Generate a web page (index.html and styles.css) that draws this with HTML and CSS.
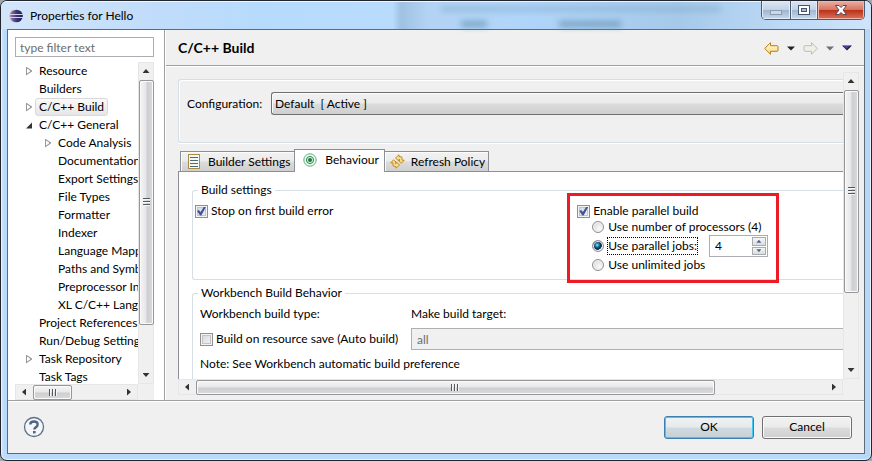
FILE: index.html
```html
<!DOCTYPE html>
<html lang="en">
<head>
<meta charset="utf-8">
<title>Properties for Hello</title>
<link rel="stylesheet" href="styles.css">
</head>
<body>
<div class="window">
  <header class="titlebar">
    <svg class="app-icon" width="14" height="14" viewBox="0 0 14 14">
      <defs><linearGradient id="ball" x1="0" x2="1"><stop offset="0" stop-color="#8e7fb4"/><stop offset=".5" stop-color="#3c3872"/><stop offset="1" stop-color="#1e1b58"/></linearGradient></defs>
      <path d="M5 .5A7 7 0 0 0 5 13.500A9 9 0 0 1 5 .5z" fill="#d99a92"/>
      <circle cx="7.500" cy="7" r="6.300" fill="url(#ball)"/>
      <path d="M1 5.500h13M1 8.500h13" stroke="#d4d4ec" stroke-width="1"/>
    </svg>
    <span class="title">Properties for Hello</span>
    <div class="blur-code" aria-hidden="true"></div>
    <div class="controls">
      <button class="ctl min" aria-label="Minimize"><svg width="14" height="14" viewBox="0 0 14 14"><rect x="1.500" y="7.500" width="11" height="4" fill="#c9d9ea" stroke="#8b9db1"/></svg></button>
      <button class="ctl max" aria-label="Maximize"><svg width="14" height="14" viewBox="0 0 14 14"><rect x="1.500" y="2.500" width="11" height="9" fill="#fff" stroke="#46536a"/><rect x="4.500" y="5.500" width="5" height="3" fill="#a9bdd6" stroke="#46536a"/></svg></button>
      <button class="ctl close" aria-label="Close"><svg width="14" height="14" viewBox="0 0 14 14"><path d="M1.500 2.500h3.500l2 2 2-2h3.500l-3.500 4.500 3.500 4.500h-3.500l-2-2-2 2h-3.500l3.500-4.500z" fill="#fff" stroke="#5b4650"/></svg></button>
    </div>
  </header>

  <div class="client">
    <div class="main">
      <aside class="nav">
        <input class="filter" type="text" placeholder="type filter text" aria-label="Filter">
        <div class="tree-frame">
          <ul class="tree">
            <li class="closed"><span>Resource</span></li>
            <li><span>Builders</span></li>
            <li class="closed selected"><span>C/C++ Build</span></li>
            <li class="open"><span>C/C++ General</span></li>
            <li class="child closed"><span>Code Analysis</span></li>
            <li class="child"><span>Documentation</span></li>
            <li class="child"><span>Export Settings</span></li>
            <li class="child"><span>File Types</span></li>
            <li class="child"><span>Formatter</span></li>
            <li class="child"><span>Indexer</span></li>
            <li class="child"><span>Language Mappings</span></li>
            <li class="child"><span>Paths and Symbols</span></li>
            <li class="child"><span>Preprocessor Include</span></li>
            <li class="child"><span>XL C/C++ Language</span></li>
            <li><span>Project References</span></li>
            <li><span>Run/Debug Settings</span></li>
            <li class="closed"><span>Task Repository</span></li>
            <li><span>Task Tags</span></li>
          </ul>
          <div class="vbar"><i class="up"></i><div class="thumb tall"><i class="grip"></i></div><i class="down"></i></div>
          <div class="hbar"><i class="left"></i><div class="thumb short"><i class="grip"></i></div><i class="right"></i></div>
          <div class="corner"></div>
        </div>
      </aside>

      <section class="content">
        <div class="page-head">
          <h1>C/C++ Build</h1>
          <nav class="tools">
            <button aria-label="Back"><svg width="15" height="13" viewBox="0 0 15 13"><defs><linearGradient id="gold" x2="0" y2="1"><stop offset="0" stop-color="#fffbe0"/><stop offset="1" stop-color="#f9d877"/></linearGradient></defs><path d="M.7 6.500l5.800-5.800v3h6.500q1 0 1 1v3.600q0 1-1 1h-6.500v3z" fill="url(#gold)" stroke="#b87d16"/></svg></button>
            <button aria-label="Back history"><svg width="8" height="5" viewBox="0 0 8 5"><path d="M0 .5h8l-4 4z" fill="#222"/></svg></button>
            <button aria-label="Forward"><svg width="15" height="13" viewBox="0 0 15 13"><path d="M14.300 6.500l-5.800-5.800v3h-6.500q-1 0-1 1v3.600q0 1 1 1h6.500v3z" fill="#eef0e8" stroke="#bcbcb8"/></svg></button>
            <button aria-label="Forward history"><svg width="8" height="5" viewBox="0 0 8 5"><path d="M0 .5h8l-4 4z" fill="#707074"/></svg></button>
            <button aria-label="Menu"><svg width="10" height="6" viewBox="0 0 10 6"><path d="M0 .5h10l-5 5z" fill="#1c1a3c"/><path d="M1.500 1h6l-3 3z" fill="#4b40a0"/></svg></button>
          </nav>
        </div>
        <div class="scroller">
          <div class="view">
            <div class="config">
              <label for="cfg">Configuration:</label>
              <select id="cfg"><option>Default&nbsp; [ Active ]</option></select>
            </div>
            <div class="tabs" role="tablist">
              <button class="tab" role="tab"><svg width="12" height="15" viewBox="0 0 12 15"><rect x=".5" y=".5" width="11" height="14" fill="#f4f8f4" stroke="#a98c47"/><path d="M2 3.500h8M2 6.500h8M2 9.500h8M2 12.500h8" stroke="#54696a"/></svg>Builder Settings</button>
              <button class="tab active" role="tab"><svg width="14" height="14" viewBox="0 0 14 14"><circle cx="7" cy="7" r="6.200" fill="#f2fbf3" stroke="#5cab80"/><circle cx="7" cy="7" r="3.600" fill="#d9efdb" stroke="#2f8b58"/><circle cx="7" cy="7" r="2" fill="#1b7a35"/></svg>Behaviour</button>
              <button class="tab" role="tab"><svg width="15" height="15" viewBox="0 0 15 15"><g fill="#fbe08c" stroke="#c08a2a"><path id="swoop" d="M5.500 4L9 .8V2.300L12 3.200V6.200H14.200L11.500 9.200 8.800 6.800H9.500V5.200L8.800 5.600V7z"/><path d="M9.500 11L6 14.200V12.700L3 11.800V8.800H.8L3.500 5.800 6.200 8.200H5.500V9.800L6.200 9.400V8z"/></g></svg>Refresh Policy</button>
            </div>
            <div class="page">
              <fieldset class="build">
                <legend>Build settings</legend>
                <div class="build-grid">
                  <label class="row"><input type="checkbox" checked>Stop on first build error</label>
                  <div class="parallel">
                    <label class="row"><input type="checkbox" checked>Enable parallel build</label>
                    <label class="row sub"><input type="radio" name="jobs">Use number of processors (4)</label>
                    <div class="row sub jobs">
                      <input type="radio" name="jobs" id="par" checked><label class="focused" for="par">Use parallel jobs:</label>
                      <div class="spinner"><input type="text" value="4" aria-label="Parallel jobs"><div class="spin"><button class="inc" aria-label="Increase"></button><button class="dec" aria-label="Decrease"></button></div></div>
                    </div>
                    <label class="row sub"><input type="radio" name="jobs">Use unlimited jobs</label>
                  </div>
                </div>
              </fieldset>
              <fieldset class="bench">
                <legend>Workbench Build Behavior</legend>
                <div class="bench-grid">
                  <span>Workbench build type:</span>
                  <label for="target">Make build target:</label>
                  <label class="row"><input type="checkbox">Build on resource save (Auto build)</label>
                  <input class="target" id="target" type="text" value="all" disabled>
                  <span class="note">Note: See Workbench automatic build preference</span>
                </div>
              </fieldset>
            </div>
          </div>
          <div class="vbar"><i class="up"></i><div class="thumb mid"><i class="grip"></i></div><i class="down"></i></div>
          <div class="hbar"><i class="left"></i><div class="thumb wide"><i class="grip"></i></div><i class="right"></i></div>
        </div>
      </section>
    </div>

    <footer class="footer">
      <button class="help" aria-label="Help"><svg width="22" height="22" viewBox="0 0 22 22"><circle cx="11" cy="11" r="9.500" fill="#f4f6fa" stroke="#5d7088" stroke-width="1.300"/><path d="M7.300 8.500Q7.300 5.500 11 5.500T14.600 8.400Q14.600 10 12.800 11.200 11.300 12.200 11.300 13.500" fill="none" stroke="#4f6483" stroke-width="2.400"/><rect x="10" y="15" width="2.600" height="2.400" fill="#4f6483"/></svg></button>
      <button class="btn primary">OK</button>
      <button class="btn">Cancel</button>
    </footer>
  </div>
</div>
</body>
</html>
```

FILE: styles.css
```css
*, *::before, *::after { box-sizing: border-box; }

body {
  margin: 0;
  background: #9fa6ae;
  color: #000;
  font: 12px/16px Lato, "Open Sans", sans-serif;
}

button, input, select { font: inherit; color: inherit; margin: 0; }
button { padding: 0; border: 0; background: none; }
svg { display: block; flex: none; }

.window {
  display: flex;
  flex-direction: column;
  height: 100vh;
  padding: 0 6px 6px;
  border: 1px solid #22252c;
  border-radius: 7px;
  background: linear-gradient(90deg, #cfe3fa 0, #b9dafb 4px, #b9dafb 99%, #b5d4f4 100%);
  box-shadow: inset 0 0 0 1px #e6f3ff;
  overflow: hidden;
}

/* Title bar */
.titlebar {
  display: flex;
  flex: none;
  align-items: center;
  height: 28px;
  margin: 0 -6px;
  padding-left: 8px;
  border-top: 1px solid #eef6ff;
  background: linear-gradient(90deg, #d3e5fa 0, #c0dcfa 18%, #b7dbfd 30%, #b9dcfd 45%, #9fc1e2 46%, #b3d3f4 49%, #b1d5fa 60%, #a6c9ea 78%, #bcd9f6 90%, #cfe4fb 100%);
}
.title { margin-left: 7px; }
.blur-code {
  align-self: stretch;
  width: 280px;
  margin-left: auto;
  background:
    linear-gradient(#7fa9c6, #7fa9c6) 0 5px / 280px 4px no-repeat,
    linear-gradient(#5f8fae, #5f8fae) 20px 19px / 26px 6px no-repeat,
    linear-gradient(#5f8fae, #5f8fae) 118px 19px / 62px 6px no-repeat;
  filter: blur(3px);
  opacity: .7;
}
.controls {
  display: flex;
  align-self: flex-start;
  height: 19px;
  margin: -1px 6px 0 40px;
  border: 1px solid #4b5b70;
  border-top: 0;
  border-radius: 0 0 5px 5px;
  overflow: hidden;
}
.ctl {
  display: flex;
  justify-content: center;
  align-items: center;
  width: 28px;
  background: linear-gradient(#dbe6f2, #c2d3e6 48%, #9fb5cf 50%, #c3daf0);
  box-shadow: inset 0 0 0 1px #e4edf7;
}
.ctl + .ctl { border-left: 1px solid #4b5b70; }
.ctl.max { width: 27px; }
.ctl.close { width: 47px; background: linear-gradient(#eab0a3, #d7745f 48%, #b92f16 50%, #d8735a); box-shadow: inset 0 0 0 1px #eeb5a8; }

/* Client area */
.client {
  display: flex;
  flex: 1;
  flex-direction: column;
  min-height: 0;
  border: 1px solid #5a6c78;
  background: #f0f0f0;
}
.main { display: flex; flex: 1; min-height: 0; }

/* Navigation */
.nav {
  display: flex;
  flex: none;
  flex-direction: column;
  width: 157px;
  padding: 7px 10px 0 7px;
  border-right: 1px solid #a0a0a0;
  background: #fff;
}
.filter {
  width: 100%;
  height: 20px;
  margin-bottom: 5px;
  padding: 0 4px;
  border: 1px solid #abadb3;
  outline: 0;
}
.filter::placeholder { color: #6d6d6d; opacity: 1; }
.tree-frame {
  display: grid;
  flex: 1;
  grid-template: minmax(0, 1fr) 16px / minmax(0, 1fr) 16px;
  min-height: 0;
}
.tree { margin: 0; padding: 0; list-style: none; overflow: hidden; white-space: nowrap; }
.tree li { display: flex; align-items: center; height: 18px; line-height: 16px; }
.tree li::before { content: ""; flex: none; width: 20px; height: 9px; }
.tree li.child { padding-left: 19px; }
.tree li.closed::before {
  background: #999;
  clip-path: polygon(11px 0, 17px 4px, 17px 5px, 11px 9px, 11px 8px, 12px 7px, 15px 5px, 15px 4px, 12px 2px, 12px 8px, 11px 9px);
}
.tree li.open::before { background: #333; clip-path: polygon(17px 2px, 17px 8px, 11px 8px); }
.tree span { padding: 0 3px; border: 1px solid transparent; border-radius: 3px; }
.tree .selected span { border-color: #d9d9d9; background: linear-gradient(#fafafa, #e6e6e6); }
.corner { background: #f0f0f0; }

/* Scroll bars */
.vbar, .hbar { display: flex; align-items: center; background: #f0f0f0; box-shadow: inset 0 0 0 1px #e6e6e6; }
.vbar { flex-direction: column; }
.vbar > i, .hbar > i { flex: none; background: #333; }
.vbar > i { width: 7px; height: 4px; margin: 7px 0; }
.hbar > i { width: 4px; height: 7px; margin: 0 7px; }
.up { clip-path: polygon(50% 0, 100% 100%, 0 100%); }
.down { clip-path: polygon(0 0, 100% 0, 50% 100%); }
.left { clip-path: polygon(100% 0, 100% 100%, 0 50%); }
.right { clip-path: polygon(0 0, 100% 50%, 0 100%); }
.vbar > .down { margin-top: auto; }
.hbar > .right { margin-left: auto; }
.thumb {
  display: flex;
  justify-content: center;
  align-items: center;
  border: 1px solid #959699;
  border-radius: 2px;
  box-shadow: inset 0 0 0 1px #fafafa;
}
.vbar .thumb { width: 15px; background: linear-gradient(90deg, #f4f4f4, #e6e6e8 48%, #cdced2 52%, #dadada); }
.hbar .thumb { height: 15px; background: linear-gradient(#f4f4f4, #e8e8e9 48%, #cdced0 52%, #dadada); }
.grip { width: 7px; height: 8px; }
.vbar .grip { background: repeating-linear-gradient(#55585c 0 1px, #f6f6f6 1px 2px, transparent 2px 3px); }
.hbar .grip { width: 8px; height: 7px; background: repeating-linear-gradient(90deg, #55585c 0 1px, #f6f6f6 1px 2px, transparent 2px 3px); }
.tall { height: 76%; }
.mid { height: 66%; }
.short { width: 39px; }
.wide { width: 78%; }

/* Page */
.content { display: flex; flex: 1; flex-direction: column; min-width: 0; border-left: 1px solid #fff; }
.page-head {
  display: flex;
  flex: none;
  justify-content: space-between;
  align-items: center;
  height: 37px;
  padding: 0 12px;
  border-bottom: 1px solid #fff;
  box-shadow: inset 0 -1px #a0a0a0;
}
h1 { margin: 0; font-size: 14px; font-weight: 700; line-height: 18px; }
.tools { display: flex; align-items: center; gap: 8px; }

.scroller {
  display: grid;
  flex: 1;
  grid-template: minmax(0, 1fr) 16px / minmax(0, 1fr) 16px;
  min-height: 0;
  margin: 5px 5px 5px 12px;
}
.view { overflow: hidden; white-space: nowrap; }
.config {
  display: flex;
  align-items: flex-start;
  height: 64px;
  margin-top: 7px;
  padding: 12px 0 0 8px;
  border: 1px solid #d5dfe5;
  border-right: 0;
  border-radius: 3px 0 0 3px;
  box-shadow: inset 1px 1px #fff, 0 1px #fff;
}
.config label { width: 84px; line-height: 23px; }
.config select {
  flex: 1;
  height: 23px;
  padding: 0 4px 0 3px;
  border: 1px solid #707070;
  border-right: 0;
  border-radius: 3px 0 0 3px;
  background: linear-gradient(#f2f2f2, #ebebeb 49%, #dcdcdc 51%, #cfcfcf);
  box-shadow: inset 1px 1px #fcfcfc;
  appearance: none;
}

.tabs { display: flex; align-items: flex-end; height: 23px; margin-top: 5px; padding-left: 2px; }
.tab {
  display: flex;
  align-items: center;
  gap: 8px;
  height: 20px;
  padding: 0 4px 0 7px;
  border: 1px solid #8c8e98;
  border-bottom: 0;
  background: linear-gradient(#f2f2f2, #ebebeb 49%, #dcdcdc 51%, #cfcfcf);
  box-shadow: inset 1px 1px #fcfcfc;
}
.tab + .tab { border-left: 0; }
.tab.active { z-index: 1; height: 23px; margin: 0 0 -1px -1px; padding: 0 5px 2px 8px; border-left: 1px solid #8c8e98; background: #fff; box-shadow: none; }
.tab:last-child { gap: 6px; padding: 0 3px 0 5px; }

.page { min-height: 300px; padding: 10px 0 0 13px; border: 1px solid #8c8e98; border-right: 0; background: #fff; }
fieldset { min-width: 0; margin: 0; padding: 0; border: 1px solid #d5dfe5; border-right: 0; border-radius: 3px 0 0 3px; }
legend { margin-left: 5px; padding: 0 3px; }
.build { height: 98px; margin-bottom: 5px; }
.build-grid { display: grid; grid-template-columns: 59fr 41fr; align-items: start; padding: 5px 0 0 2px; }
.row { display: flex; align-items: center; height: 16px; gap: 3px; }
.parallel { position: relative; }
.parallel::after {
  content: "";
  position: absolute;
  inset: -10px auto auto -10px;
  width: 212px;
  height: 90px;
  border: 3px solid #ed1c24;
  pointer-events: none;
}
.sub { gap: 4px; padding-left: 15px; }
.jobs { height: 22px; }

input[type="checkbox"], input[type="radio"] { flex: none; width: 13px; height: 13px; border: 1px solid #8e8f8f; appearance: none; }
input[type="checkbox"] {
  background: linear-gradient(135deg, #d2d5da, #f6f6f6);
  box-shadow: inset 0 0 0 1px #f4f4f4, inset 0 0 0 2px #c0c4ca;
}
input[type="checkbox"]:checked::after {
  content: "";
  display: block;
  width: 9px;
  height: 9px;
  margin: 1px;
  background: #3f549c;
  clip-path: polygon(0 50%, 20% 38%, 40% 62%, 78% 0, 100% 4%, 48% 100%, 34% 100%);
}
input[type="radio"] {
  width: 12px;
  height: 12px;
  border-radius: 50%;
  background: radial-gradient(circle at 65% 65%, #fafafa, #cfd2d6);
  box-shadow: inset 0 0 0 1px #f4f4f4;
}
input[type="radio"]:checked { background: radial-gradient(circle at 42% 40%, #a7e2f5 0, #2283ac 22%, #0b3a5c 40%, #0d3350 56%, #dfe4e8 60%); }
.focused { height: 16px; outline: 1px dotted #000; }
.spinner { display: flex; width: 59px; height: 22px; margin-left: 8px; border: 1px solid #abadb3; background: #fff; }
.spinner input { flex: 1; min-width: 0; padding: 0 5px; border: 0; background: none; outline: 0; }
.spin { display: grid; flex: none; width: 16px; padding: 1px; gap: 1px; }
.spin button { display: flex; justify-content: center; align-items: center; border: 1px solid #a9abae; background: linear-gradient(#f6f6f6, #dcdcdc); }
.spin button::after { content: ""; width: 5px; height: 3px; background: #4a5f9e; clip-path: polygon(0 0, 100% 0, 50% 100%); }
.spin .inc::after { clip-path: polygon(50% 0, 100% 100%, 0 100%); }

.bench { height: 140px; }
.bench-grid {
  display: grid;
  grid-template-columns: 211px 1fr;
  grid-template-rows: 16px 22px 16px;
  row-gap: 6px;
  align-items: center;
  padding: 5px 0 0 7px;
}
.bench-grid .note { grid-column: 1 / -1; }
.target { width: 100%; height: 22px; padding: 0 5px; border: 1px solid #afafaf; border-right: 0; background: #f0f0f0; color: #6d6d6d; }

/* Footer */
.footer {
  display: flex;
  flex: none;
  align-items: center;
  gap: 8px;
  height: 53px;
  padding: 0 12px 0 15px;
  border-top: 1px solid #a0a0a0;
  box-shadow: inset 0 1px #fff;
}
.help { margin-right: auto; }
.btn {
  width: 90px;
  height: 23px;
  border: 1px solid #707070;
  border-radius: 3px;
  background: linear-gradient(#f2f2f2, #ebebeb 49%, #dcdcdc 51%, #cfcfcf);
  box-shadow: inset 0 0 0 1px #fafafa;
}
.primary { border-color: #3c7fb1; background: linear-gradient(#f0f3f4, #e5eaed 49%, #cfdbe0 51%, #c4d0d6); box-shadow: inset 0 0 0 1px #43c8f2; }
```
